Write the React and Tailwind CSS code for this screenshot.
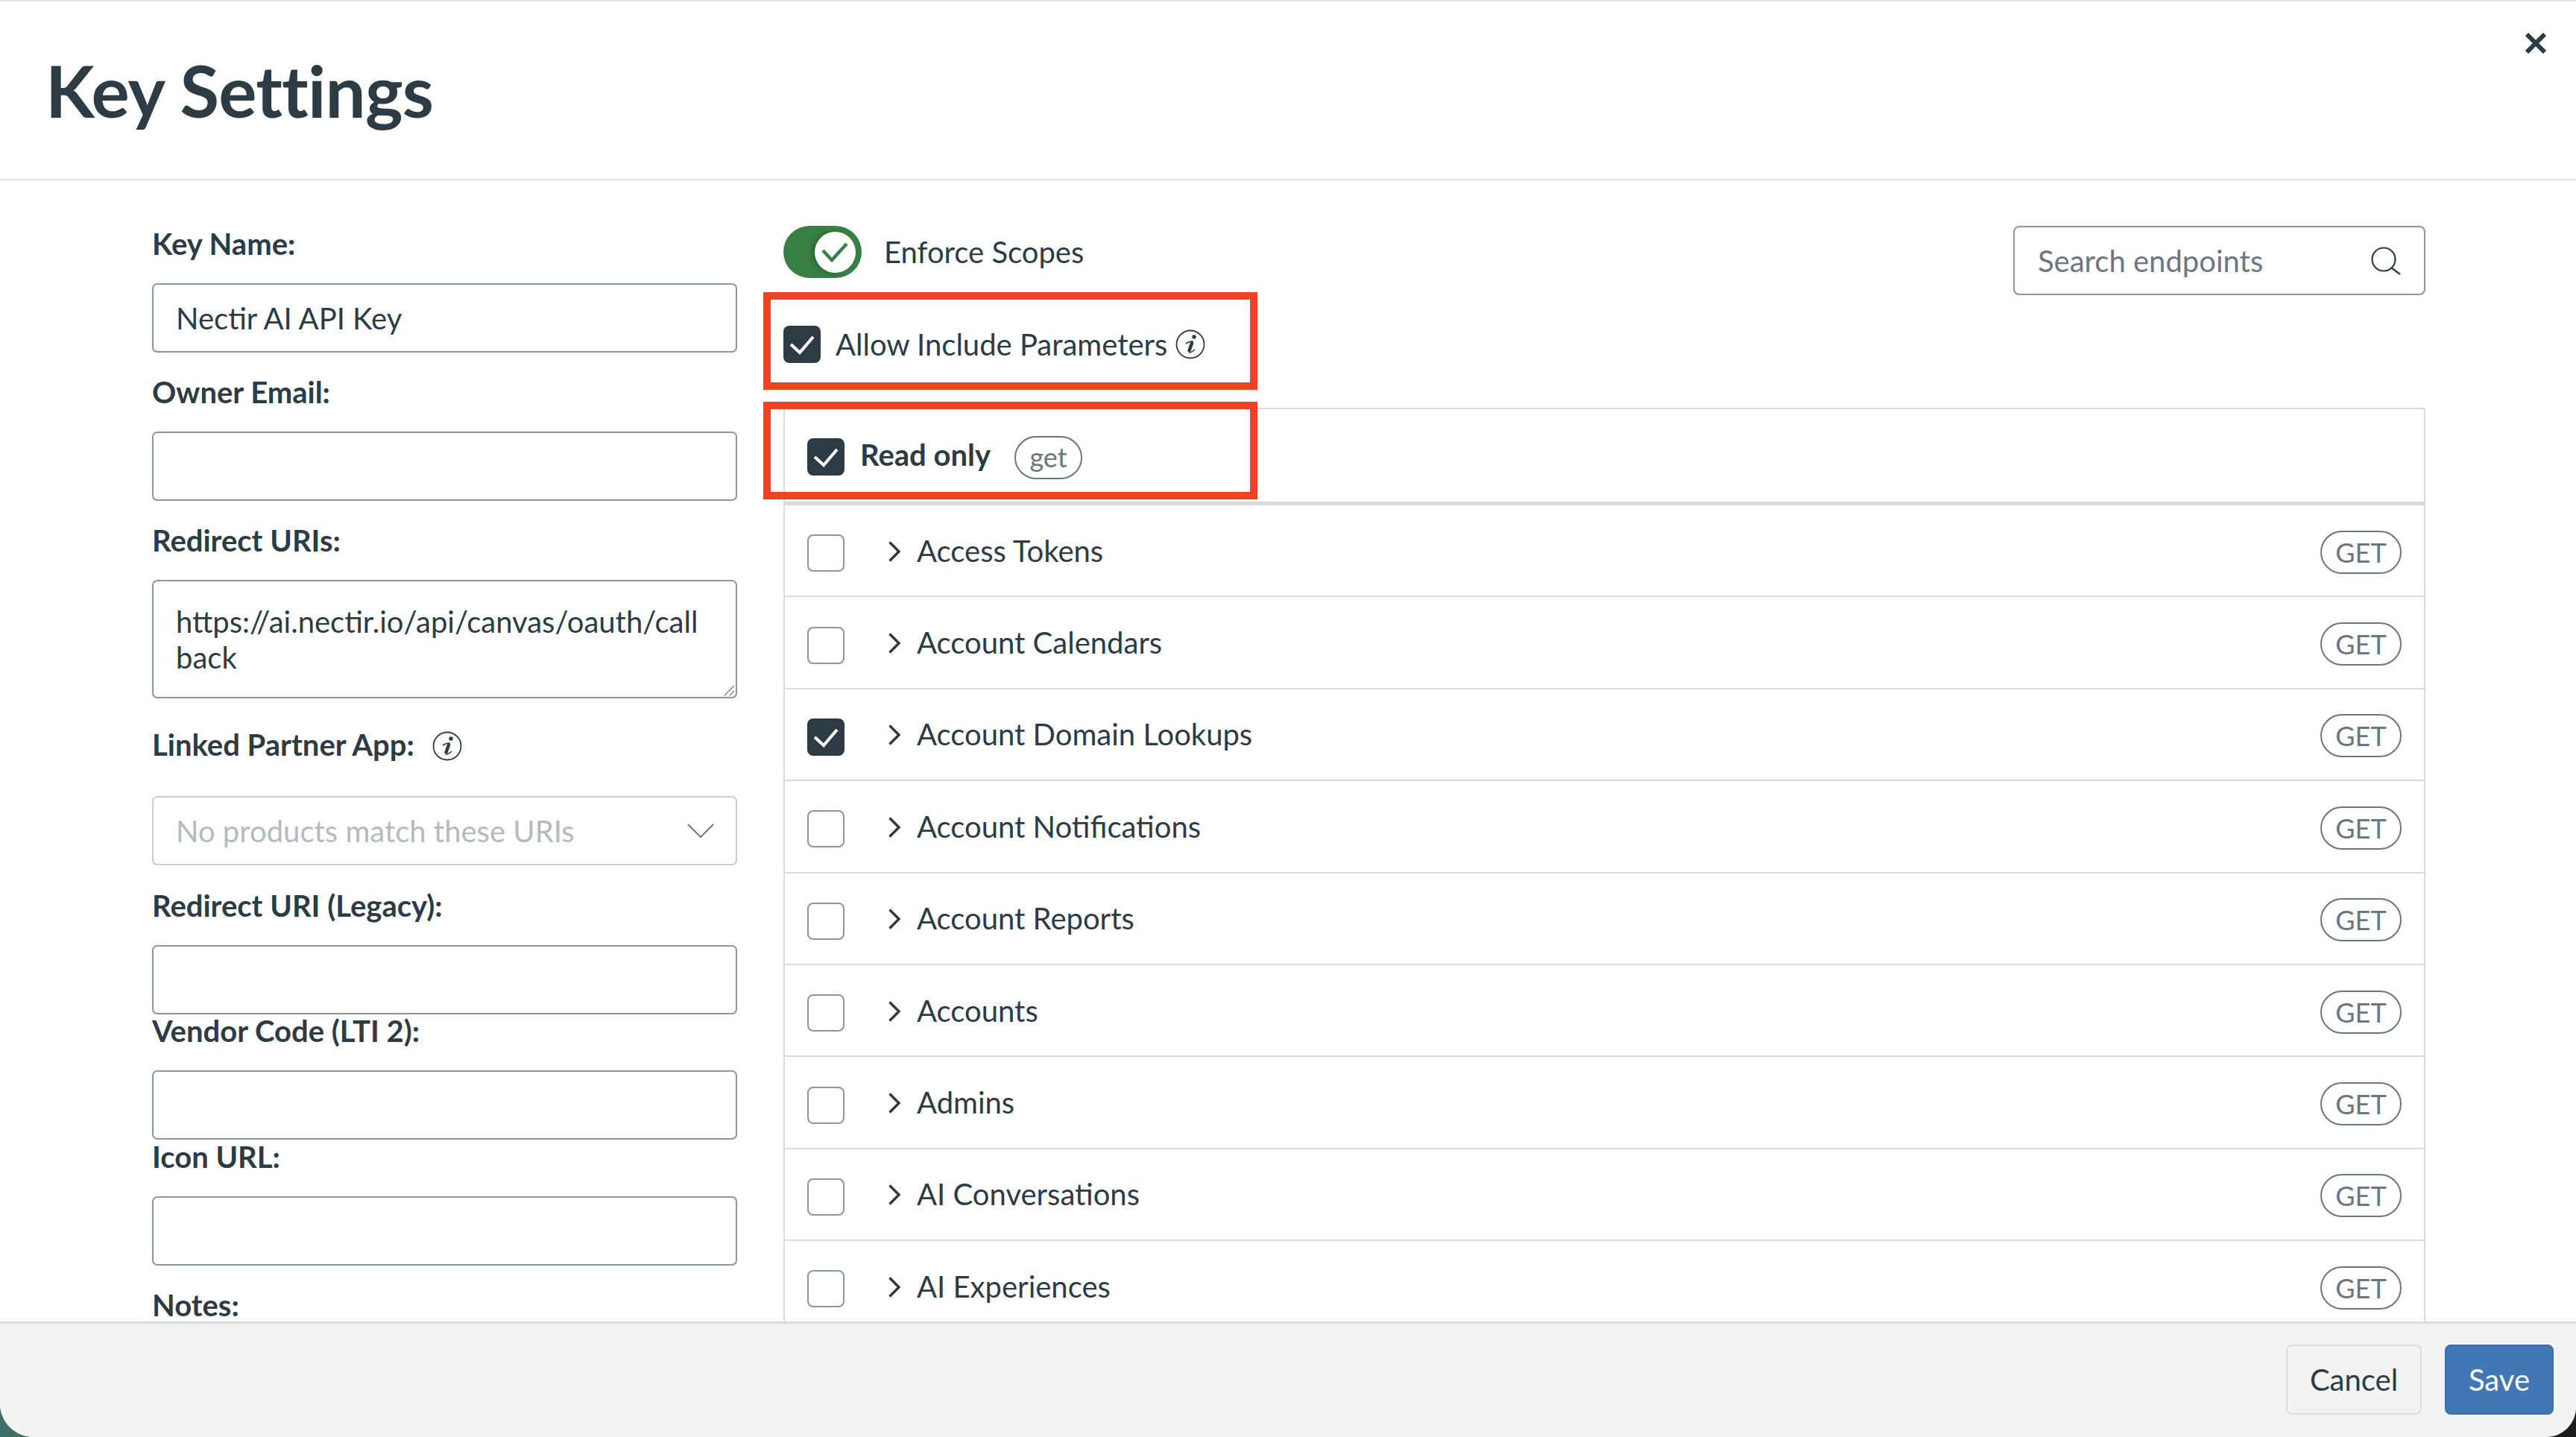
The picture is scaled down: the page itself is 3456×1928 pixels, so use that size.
import React from "react";

const endpoints = [
  { name: "Access Tokens" },
  { name: "Account Calendars" },
  { name: "Account Domain Lookups", checked: true },
  { name: "Account Notifications" },
  { name: "Account Reports" },
  { name: "Accounts" },
  { name: "Admins" },
  { name: "AI Conversations" },
  { name: "AI Experiences" },
];

const boxClass =
  "w-[785px] h-[93px] border-2 border-[#8b96a0] rounded-[7px] bg-white px-[30px] flex items-center text-[40px] text-[#2d3b45]";

const CheckMark = ({ className }) => (
  <svg viewBox="0 0 50 50" className={className} fill="none" stroke="currentColor" strokeWidth="4.2">
    <path d="M10 25 L22 36 L40 15" />
  </svg>
);

const Checkbox = ({ checked }) =>
  checked ? (
    <span className="w-[50px] h-[50px] shrink-0 rounded-[8px] bg-[#2d3b45] text-white block">
      <CheckMark className="w-[50px] h-[50px]" />
    </span>
  ) : (
    <span className="w-[50px] h-[50px] shrink-0 rounded-[8px] border-2 border-[#8b96a0] bg-white block" />
  );

const InfoIcon = ({ className }) => (
  <svg viewBox="0 0 40 40" className={className} fill="none" stroke="#2d3b45">
    <circle cx="20" cy="20" r="18.5" strokeWidth="1.8" />
    <circle cx="25" cy="10" r="2.7" fill="#2d3b45" stroke="none" />
    <path d="M14 19 Q19 15.5 23 16 L18.5 30" strokeWidth="1.6" strokeLinejoin="round" />
    <path d="M22.5 17 L18 30" strokeWidth="4.4" />
    <path d="M18 31 Q20 32 26 27" strokeWidth="1.6" />
  </svg>
);

const Label = ({ children }) => (
  <div className="h-[54px] mb-[26px] flex items-center text-[40px] font-bold text-[#2d3b45]">
    {children}
  </div>
);

const Chevron = () => (
  <svg viewBox="0 0 18 28" className="w-[18px] h-[28px] shrink-0" fill="none" stroke="#2d3b45" strokeWidth="3.5">
    <path d="M2.5 1.5 L15 14 L2.5 26.5" />
  </svg>
);

const Pill = ({ children, className }) => (
  <span className={`border-2 border-[#6b7780] rounded-full text-[#6b7780] flex items-center justify-center shrink-0 bg-white ${className}`}>
    {children}
  </span>
);

export default function App() {
  return (
    <div className="relative w-[3456px] h-[1928px] overflow-hidden bg-linear-to-r from-[#3f6f68] to-[#1c1c1c] font-[Lato,sans-serif]">
      <div className="h-full flex flex-col bg-white rounded-bl-[45px] rounded-br-[40px] overflow-hidden">
        {/* header */}
        <header className="relative h-[242px] shrink-0 border-t-2 border-b-2 border-[#e2e4e6] flex items-center pl-[61px]">
          <h1 className="text-[96px] font-bold tracking-[-0.8px] text-[#2d3b45]">Key Settings</h1>
          <button className="absolute top-[42px] right-[40px] text-[#2d3b45]">
            <svg viewBox="0 0 28 28" className="w-[28px] h-[28px]" fill="none" stroke="currentColor" strokeWidth="6">
              <path d="M2 2 L26 26 M26 2 L2 26" />
            </svg>
          </button>
        </header>

        <div className="flex-1 min-h-0 flex">
          {/* left form */}
          <div className="w-[1051px] shrink-0 pl-[204px] pt-[58px]">
            <Label>Key Name:</Label>
            <div className={`${boxClass} mb-[26px]`}>Nectir AI API Key</div>
            <Label>Owner Email:</Label>
            <input className={`${boxClass} mb-[26px] block`} />
            <Label>Redirect URIs:</Label>
            <div className="relative w-[785px] h-[159px] border-2 border-[#8b96a0] rounded-[7px] px-[30px] pt-[30px] mb-[35px] text-[40px] leading-[48px] text-[#2d3b45]">
              https://ai.nectir.io/api/canvas/oauth/call
              <br />
              back
              <svg viewBox="0 0 16 16" className="absolute right-[1px] bottom-[1px] w-[16px] h-[16px]" fill="none" stroke="#6b7780" strokeWidth="1.2">
                <path d="M2 15 L15 2 M9 15 L15 9" />
              </svg>
            </div>
            <div className="h-[54px] mb-[42px] flex items-center text-[40px] font-bold text-[#2d3b45]">
              Linked Partner App:
              <InfoIcon className="w-[40px] h-[40px] ml-[24px] mt-[4px]" />
            </div>
            <div className="w-[785px] h-[93px] border-2 border-[#c7cdd1] rounded-[7px] px-[30px] flex items-center justify-between mb-[27px] text-[40px] text-[#b4bbc0]">
              No products match these URIs
              <svg viewBox="0 0 36 20" className="w-[36px] h-[20px] -mr-[1px]" fill="none" stroke="#6b7780" strokeWidth="2">
                <path d="M1 1 L18 18 L35 1" />
              </svg>
            </div>
            <Label>Redirect URI (Legacy):</Label>
            <input className={`${boxClass} -mb-[5px] block`} />
            <Label>Vendor Code (LTI 2):</Label>
            <input className={`${boxClass} -mb-[4px] block`} />
            <Label>Icon URL:</Label>
            <input className={`${boxClass} mb-[31px] block`} />
            <div className="h-[44px] leading-[44px] text-[40px] font-bold text-[#2d3b45]">Notes:</div>
          </div>

          {/* scopes */}
          <div className="w-[2203px] shrink-0 pt-[61px] overflow-hidden">
            <div className="flex justify-between items-start">
              <div className="flex items-center h-[70px] text-[40px] text-[#2d3b45]">
                <span className="relative w-[105px] h-[70px] rounded-full bg-[#387f43] block">
                  <span className="absolute left-[42px] top-[7.5px] w-[55px] h-[55px] rounded-full bg-white text-[#387f43] shadow-[-4px_0_6px_rgba(0,0,0,0.2)] block">
                    <svg viewBox="0 0 55 55" className="w-[55px] h-[55px]" fill="none" stroke="currentColor" strokeWidth="4.5">
                      <path d="M11 25 L23 38 L43 16" />
                    </svg>
                  </span>
                </span>
                <span className="ml-[30px]">Enforce Scopes</span>
              </div>
              <div className="w-[553px] h-[93px] border-2 border-[#8b96a0] rounded-[8px] pl-[31px] pr-[31px] flex items-center justify-between text-[40px] text-[#6b7780]">
                Search endpoints
                <svg viewBox="0 0 40 38" className="w-[40px] h-[38px]" fill="none" stroke="#2d3b45" strokeWidth="2.2">
                  <circle cx="17" cy="17" r="15.5" />
                  <path d="M27 28 L39 37" />
                </svg>
              </div>
            </div>

            <div className="flex items-center h-[50px] mt-[41px] text-[40px] text-[#2d3b45]">
              <Checkbox checked />
              <span className="ml-[20px]">Allow Include Parameters</span>
              <InfoIcon className="w-[40px] h-[40px] ml-[11px]" />
            </div>

            <div className="mt-[60px] border-2 border-b-0 border-[#d7dade] rounded-t-[4px]">
              <div className="h-[129px] px-[30px] flex items-center border-b-[5px] border-[#d7dade] text-[40px] font-bold text-[#2d3b45]">
                <span className="mt-[3px]">
                  <Checkbox checked />
                </span>
                <span className="ml-[21px] -mt-[3px]">Read only</span>
                <Pill className="w-[91px] h-[58px] ml-[32px] mt-[5px] text-[36px] font-normal pb-[2px]">get</Pill>
              </div>
              {endpoints.map((item) => (
                <div key={item.name} className="h-[123.4px] pl-[30px] pr-[30px] pt-[4px] flex items-center border-b-2 border-[#d7dade] text-[40px] text-[#2d3b45]">
                  <span className="mt-[3px]">
                    <Checkbox checked={item.checked} />
                  </span>
                  <span className="ml-[58px] -mt-[2px]">
                    <Chevron />
                  </span>
                  <span className="ml-[21px] -mt-[4px]">{item.name}</span>
                  <Pill className="ml-auto w-[109px] h-[58px] text-[36px]">GET</Pill>
                </div>
              ))}
            </div>
          </div>
        </div>

        {/* footer */}
        <footer className="h-[155px] shrink-0 bg-[#f3f3f3] border-t-[3px] border-[#d7dade] flex justify-end items-start pt-[28px] pr-[30px] text-[40px]">
          <button className="w-[182px] h-[94px] border-2 border-[#dadde0] rounded-[8px] text-[#2d3b45]">Cancel</button>
          <button className="w-[146px] h-[94px] ml-[31px] border-2 border-[#3a6ca6] rounded-[8px] bg-[#4277b5] text-white">Save</button>
        </footer>
      </div>

      {/* annotations drawn over the screenshot */}
      <div className="absolute left-[1024px] top-[392px] w-[663px] h-[131px] border-[10px] border-[#ee4323]" />
      <div className="absolute left-[1024px] top-[539px] w-[663px] h-[131px] border-[10px] border-[#ee4323]" />
    </div>
  );
}
